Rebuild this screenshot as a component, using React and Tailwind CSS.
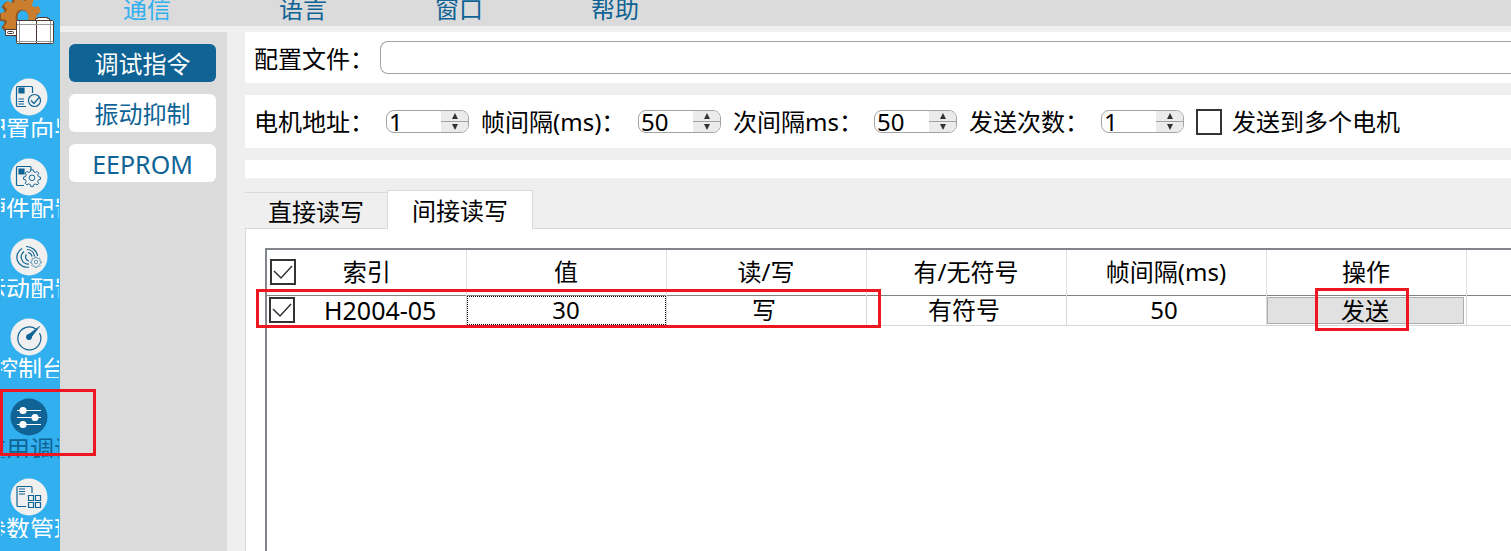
import { useState } from "react";

const menus = ["通信", "语言", "窗口", "帮助"];
const pages = ["调试指令", "振动抑制", "EEPROM"];
const columns = ["索引", "值", "读/写", "有/无符号", "帧间隔(ms)", "操作"];

function WizardIcon() {
  return (
    <>
      <path d="M16 28.500H7.500a1 1 0 0 1-1-1v-18a1 1 0 0 1 1-1h14a1 1 0 0 1 1 1V15" />
      <path d="M9 10h5v5H9z" fill="#0f6395" />
      <path d="M8.500 21h5.500M8.500 23.500h5.500M8.500 26h5.500" />
      <circle cx="24.500" cy="22.500" r="6" fill="#f0f0f0" />
      <path d="m21 22.500 3 3 5-6" />
    </>
  );
}

function Gear({ cx, cy, scale }) {
  return (
    <g transform={`translate(${cx} ${cy}) scale(${scale})`}>
      <path
        fill="#f0f0f0"
        d="M-1.500-9h3l.6 2.500 2.100.9 2.200-1.300 2.100 2.100-1.300 2.200.9 2.100 2.400.5v3l-2.500.6-.9 2.100 1.300 2.200-2.100 2.100-2.200-1.300-2 .8-.6 2.500h-3l-.6-2.500-2.100-.9-2.200 1.300-2.100-2.100 1.300-2.200-.9-2.100L-10.500 3V0l2.400-.6.9-2.100-1.300-2.200 2.100-2.100 2.200 1.300 2.100-.8z"
      />
      <circle cy="1" r="3.500" />
    </g>
  );
}

function HardwareIcon() {
  return (
    <>
      <path d="M14 27.500H7.500a1 1 0 0 1-1-1v-17a1 1 0 0 1 1-1H20a1 1 0 0 1 1 1V12" />
      <path d="M9 11h5v5H9z" fill="#0f6395" />
      <Gear cx={22} cy={19} scale={0.8} />
    </>
  );
}

function MotionIcon() {
  return (
    <>
      <path d="M19 29A10 10 0 0 1 12 10.500M19 26A7 7 0 0 1 14 13.500M19 23a4 4 0 0 1-2.500-6.500" />
      <path d="M16 8.500c6 0 11 4 11.500 9.500M17 11.500c4 0 7 3 7.500 7M18 14.500c2.500.5 3.500 2 4 4" />
      <Gear cx={26} cy={23.500} scale={0.5} />
    </>
  );
}

function ConsoleIcon() {
  return (
    <>
      <path d="M26 11A11.500 11.500 0 1 0 29.500 15" />
      <path d="M29.500 8.500 18 17l2.500 3z" fill="#0f6395" strokeWidth="0.800" />
      <circle cx="19" cy="19" r="2.300" fill="#0f6395" />
    </>
  );
}

function DebugIcon() {
  return (
    <g stroke="#fff" fill="#fff">
      <path d="M7 12.500h24M7 19.500h24M7 26.500h24" />
      <circle cx="13" cy="12.500" r="3" />
      <circle cx="25" cy="19.500" r="3" />
      <circle cx="13" cy="26.500" r="3" />
    </g>
  );
}

function ParamsIcon() {
  return (
    <>
      <path d="M16 28.500H8a1 1 0 0 1-1-1v-18a1 1 0 0 1 1-1h13a1 1 0 0 1 1 1V15M9 11h6M9 13.500h6M9 16h6" />
      <path d="M18.500 17.500h5v5h-5zM25.500 17.500h5v5h-5zM18.500 24.500h5v5h-5zM25.500 24.500h5v5h-5z" />
    </>
  );
}

const modules = [
  { name: "配置向导", Icon: WizardIcon },
  { name: "硬件配置", Icon: HardwareIcon },
  { name: "运动配置", Icon: MotionIcon },
  { name: "控制台", Icon: ConsoleIcon },
  { name: "应用调试", Icon: DebugIcon, active: true },
  { name: "参数管理", Icon: ParamsIcon },
];

const teeth = [-10, 30, 70, 110, 150, 190, 230, 270, 310];

function Logo() {
  return (
    <svg viewBox="0 0 60 46" className="block h-[46px] w-[60px] shrink-0" aria-label="logo">
      <g transform="translate(19 17)" fill="#8f5420">
        {teeth.map((a) => (
          <path key={a} d="M-5-13-3.500-20h7L5-13z" transform={`rotate(${a})`} />
        ))}
        <circle r="15.500" />
      </g>
      <g transform="translate(21 16)" fill="#c97d2d">
        {teeth.map((a) => (
          <path key={a} d="M-4.500-12-3-20h6l1.500 8z" transform={`rotate(${a})`} />
        ))}
        <circle r="15.500" />
        <ellipse rx="6.500" ry="7.500" cx="1" cy="1" fill="#8f5420" />
        <ellipse rx="5.500" ry="7" cx="2" cy="1.500" fill="#32afef" />
      </g>
      <g fill="#fff" stroke="#4a3a35" strokeWidth="1">
        <path d="M35.500 20.500v-2h2v-1h10v1h2v2z" />
        <path d="M5.500 29.500h11v6h-11z" />
        <rect x="7.500" y="31.500" width="6" height="2" rx="1" />
        <rect x="16.500" y="20.500" width="37" height="23" rx="1" />
        <path d="M36.500 21v22" />
        <path d="M19.500 21v22M50.500 21v22M17 24.500h36M17 41.500h36" stroke="#999" />
      </g>
    </svg>
  );
}

function Module({ name, Icon, active }) {
  return (
    <button className="flex h-20 w-full shrink-0 flex-col justify-start px-px">
      <svg viewBox="0 0 38 38" className="ml-[9px] block size-[38px]" fill="none" stroke="#0f6395" strokeWidth="1.200">
        <circle cx="19" cy="19" r="18.500" stroke="none" fill={active ? "#0f6395" : "#f0f0f0"} />
        <Icon />
      </svg>
      <span
        className={`flex h-[22px] w-full justify-center overflow-hidden leading-[26px] whitespace-nowrap ${active ? "text-[#0f6395]" : "text-white"}`}
      >
        {name}
      </span>
    </button>
  );
}

function Spin({ id, label, value, className }) {
  const [val, setVal] = useState(value);
  return (
    <div className={`flex shrink-0 items-center ${className}`}>
      <label htmlFor={id} className="flex-1 whitespace-nowrap">
        {label}
      </label>
      <div className="flex h-[23px] w-[83px] overflow-hidden rounded-lg border border-[#a3a3a3]">
        <input
          id={id}
          value={val}
          onChange={(e) => setVal(e.target.value)}
          className="w-[54px] pl-0.5 leading-[22px] outline-none"
        />
        <div className="flex flex-1 flex-col bg-[#ebebeb]">
          <button
            aria-label="+"
            className="flex flex-1 items-center justify-center border-b border-[#a3a3a3]"
            onClick={() => setVal(Number(val) + 1)}
          >
            <svg viewBox="0 0 8 6" className="h-1.5 w-2" fill="#333">
              <path d="M4 0 7 6H1z" />
            </svg>
          </button>
          <button
            aria-label="-"
            className="flex flex-1 items-center justify-center"
            onClick={() => setVal(Number(val) - 1)}
          >
            <svg viewBox="0 0 8 6" className="h-1.5 w-2" fill="#333">
              <path d="M4 6 7 0H1z" />
            </svg>
          </button>
        </div>
      </div>
    </div>
  );
}

function Check({ id, label, checked }) {
  const [on, setOn] = useState(Boolean(checked));
  return (
    <span className="grid size-[26px] shrink-0">
      <input
        id={id}
        type="checkbox"
        aria-label={label}
        checked={on}
        onChange={() => setOn(!on)}
        className="col-start-1 row-start-1 size-[26px] appearance-none border-2 border-[#333] bg-white"
      />
      {on && (
        <svg viewBox="0 0 26 26" className="pointer-events-none col-start-1 row-start-1" fill="none" stroke="#333" strokeWidth="1.500">
          <path d="m4 12 7 7L22 7" />
        </svg>
      )}
    </span>
  );
}

function CommandTable() {
  return (
    <div className="ml-[19px] flex-1 overflow-hidden border-t-2 border-l-2 border-[#82858c]">
      <table className="w-[1400px] table-fixed border-collapse">
        <thead>
          <tr className="h-[45px] border-b border-[#828282]">
            {columns.map((c, i) => (
              <th key={c} className={`border-r border-[#e2e2e2] p-0 font-normal ${i === 0 ? "w-[199px]" : "w-[200px]"}`}>
                {i === 0 ? (
                  <div className="flex items-center pl-[3px]">
                    <Check label="全选" checked />
                    <span className="flex-1 pr-7">{c}</span>
                  </div>
                ) : (
                  c
                )}
              </th>
            ))}
            <th className="p-0" />
          </tr>
        </thead>
        <tbody>
          <tr className="h-[30px] border-b border-[#d8d8d8] text-center">
            <td className="border-r border-[#d8d8d8] p-0">
              <div className="flex items-center pl-0.5">
                <Check label="H2004-05" checked />
                <span className="flex-1 text-[25px] leading-7">H2004-05</span>
              </div>
            </td>
            <td className="p-0">
              <div className="h-[29px] border border-dotted border-black leading-[26px]">30</div>
            </td>
            <td className="border-x border-[#d8d8d8] p-0 pr-1 leading-7">写</td>
            <td className="border-r border-[#d8d8d8] p-0 pr-1 leading-7">有符号</td>
            <td className="border-r border-[#d8d8d8] p-0 pr-1 leading-7">50</td>
            <td className="border-r border-[#d8d8d8] p-0">
              <button className="block h-[27px] w-[197px] border border-[#adadad] bg-[#e1e1e1] leading-[25px]">
                发送
              </button>
            </td>
            <td className="p-0" />
          </tr>
        </tbody>
      </table>
    </div>
  );
}

export default function App() {
  return (
    <div className="relative flex h-screen overflow-hidden bg-[#efefef] font-['Noto_Sans','Noto_Sans_CJK_SC',sans-serif] text-[24px] leading-8 text-black">
      <aside className="flex w-[60px] shrink-0 flex-col overflow-hidden bg-[#32afef]">
        <Logo />
        <nav className="mt-8">
          {modules.map((m) => (
            <Module key={m.name} {...m} />
          ))}
        </nav>
      </aside>

      <div className="flex min-w-0 flex-1 flex-col">
        <header className="flex h-[26px] shrink-0 bg-[#dbdbdb] pl-[9px] text-[#0f6395]">
          {menus.map((m, i) => (
            <button key={m} className={`h-[18px] w-[156px] leading-[18px] ${i === 0 ? "text-[#32afef]" : ""}`}>
              {m}
            </button>
          ))}
        </header>

        <div className="mt-1.5 flex min-h-0 flex-1">
          <nav className="flex w-[167px] shrink-0 flex-col gap-3 bg-[#dbdbdb] pt-3 pr-[11px] pl-[9px]">
            {pages.map((p, i) => (
              <button
                key={p}
                className={`h-[38px] rounded-md pt-0.5 ${i === 0 ? "bg-[#0f6395] text-white" : "bg-white text-[#0f6395]"} ${p === "EEPROM" ? "text-[25px]" : ""}`}
              >
                {p}
              </button>
            ))}
          </nav>

          <main className="ml-[18px] flex min-w-0 flex-1 flex-col">
            <section className="flex h-[51px] shrink-0 items-center overflow-hidden bg-white pl-[9px]">
              <label htmlFor="file" className="w-[126px] shrink-0 pt-0.5">
                配置文件：
              </label>
              <input id="file" className="h-[33px] min-w-0 flex-1 rounded-l-lg border border-r-0 border-[#a3a3a3] px-2 outline-none" />
            </section>

            <section className="mt-3 flex h-[53px] shrink-0 items-center gap-3 overflow-hidden bg-white pl-[9px]">
              <Spin id="addr" label="电机地址：" value="1" className="w-[215px]" />
              <Spin id="frame" label="帧间隔(ms)：" value="50" className="w-[240px]" />
              <Spin id="gap" label="次间隔ms：" value="50" className="w-[224px]" />
              <Spin id="times" label="发送次数：" value="1" className="w-[215px]" />
              <div className="flex items-center gap-2.5">
                <Check id="multi" />
                <label htmlFor="multi" className="whitespace-nowrap">
                  发送到多个电机
                </label>
              </div>
            </section>

            <section className="mt-3 h-[18px] shrink-0 bg-white" />

            <div className="mt-3 flex h-[39px] shrink-0 items-end" role="tablist">
              <button role="tab" className="h-[37px] w-[142px] border-y border-[#d9d9d9] pt-0.5">
                直接读写
              </button>
              <button role="tab" aria-selected="true" className="h-[39px] w-[146px] border border-b-0 border-[#d9d9d9] bg-white pt-0.5">
                间接读写
              </button>
              <div className="flex-1 border-b border-[#d9d9d9]" />
            </div>

            <section className="flex min-h-0 flex-1 flex-col border-l border-[#d9d9d9] bg-white pt-[19px]">
              <CommandTable />
            </section>
          </main>
        </div>
      </div>

      {/* highlighted steps */}
      <div className="pointer-events-none absolute top-[389px] left-0 h-[67px] w-24 border-3 border-[#ee1620]" />
      <div className="pointer-events-none absolute top-[289px] left-64 h-[39px] w-[625px] border-3 border-[#ee1620]" />
      <div className="pointer-events-none absolute top-[288px] left-[1315px] h-[43px] w-[94px] border-3 border-[#ee1620]" />
    </div>
  );
}
